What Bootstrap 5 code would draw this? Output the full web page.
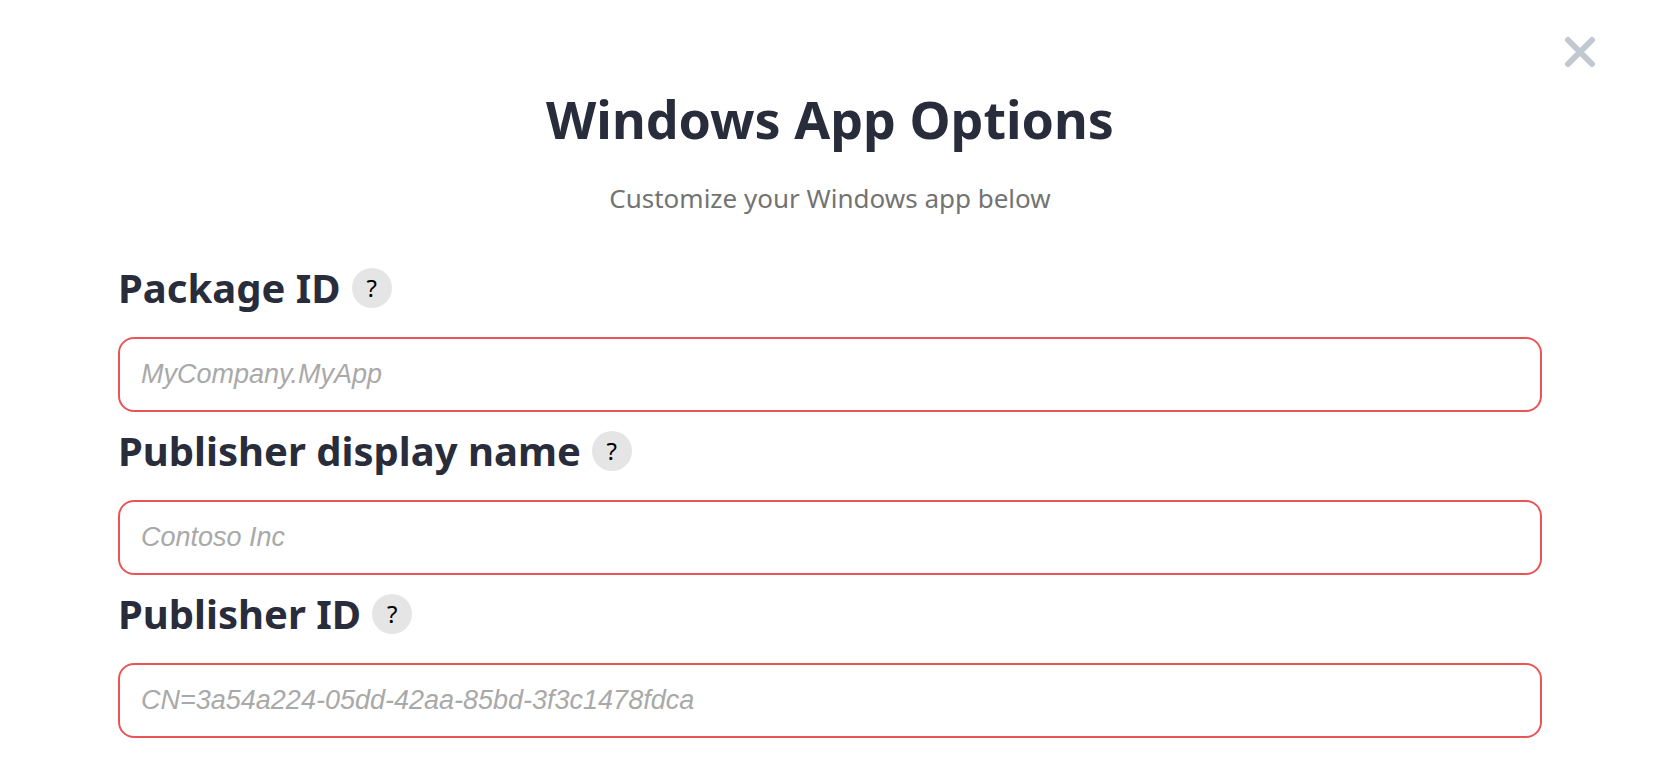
<!DOCTYPE html>
<html lang="en">
<head>
<meta charset="utf-8">
<meta name="viewport" content="width=device-width, initial-scale=1">
<title>Windows App Options</title>
<link rel="stylesheet" href="https://cdn.jsdelivr.net/npm/bootstrap@5.3.0/dist/css/bootstrap.min.css">
<style>
body{font-family:"Noto Sans",sans-serif;color:#292c3a}
.options-panel{padding:89px 114px 16px 118px}
.options-title{font-size:52px;line-height:60px;font-weight:700}
.intro{font-size:26px;line-height:36px;color:#737373;margin:31px 0 42px}
.options-form{gap:9px}
.field-head{gap:11px;margin-bottom:19px}
.field-label{font-size:40px;line-height:60px;font-weight:700}
.help-btn{width:40px;height:40px;font-size:24px;line-height:40px;background:#e5e5e5;color:#000}
.option-input{height:75px;border:2px solid #ea5656;border-radius:16px;padding:0 21px;font:27px "Liberation Sans",Arial,sans-serif}
.option-input::placeholder{color:#a9a9a9;font-style:italic;opacity:1}
.close-btn{top:36px;right:60px;line-height:0}
</style>
</head>
<body class="bg-white">
<main class="options-panel position-relative">
<button type="button" class="close-btn btn border-0 p-0 position-absolute" aria-label="Close"><svg width="32" height="32" viewBox="0 0 32 32"><path d="M4 4L28 28M28 4L4 28" stroke="#c1c8d1" stroke-width="6" stroke-linecap="round"/></svg></button>
<header class="text-center">
<h1 class="options-title mb-0">Windows App Options</h1>
<p class="intro">Customize your Windows app below</p>
</header>
<form class="options-form d-grid">
<div>
<div class="field-head d-flex align-items-center"><label class="field-label" for="package-id">Package ID</label><button type="button" class="help-btn btn rounded-circle p-0 border-0" aria-label="Package ID help">?</button></div>
<input type="text" class="option-input form-control" id="package-id" placeholder="MyCompany.MyApp">
</div>
<div>
<div class="field-head d-flex align-items-center"><label class="field-label" for="publisher-name">Publisher display name</label><button type="button" class="help-btn btn rounded-circle p-0 border-0" aria-label="Publisher display name help">?</button></div>
<input type="text" class="option-input form-control" id="publisher-name" placeholder="Contoso Inc">
</div>
<div>
<div class="field-head d-flex align-items-center"><label class="field-label" for="publisher-id">Publisher ID</label><button type="button" class="help-btn btn rounded-circle p-0 border-0" aria-label="Publisher ID help">?</button></div>
<input type="text" class="option-input form-control" id="publisher-id" placeholder="CN=3a54a224-05dd-42aa-85bd-3f3c1478fdca">
</div>
</form>
</main>
<script src="https://cdn.jsdelivr.net/npm/bootstrap@5.3.0/dist/js/bootstrap.bundle.min.js"></script>
</body>
</html>
